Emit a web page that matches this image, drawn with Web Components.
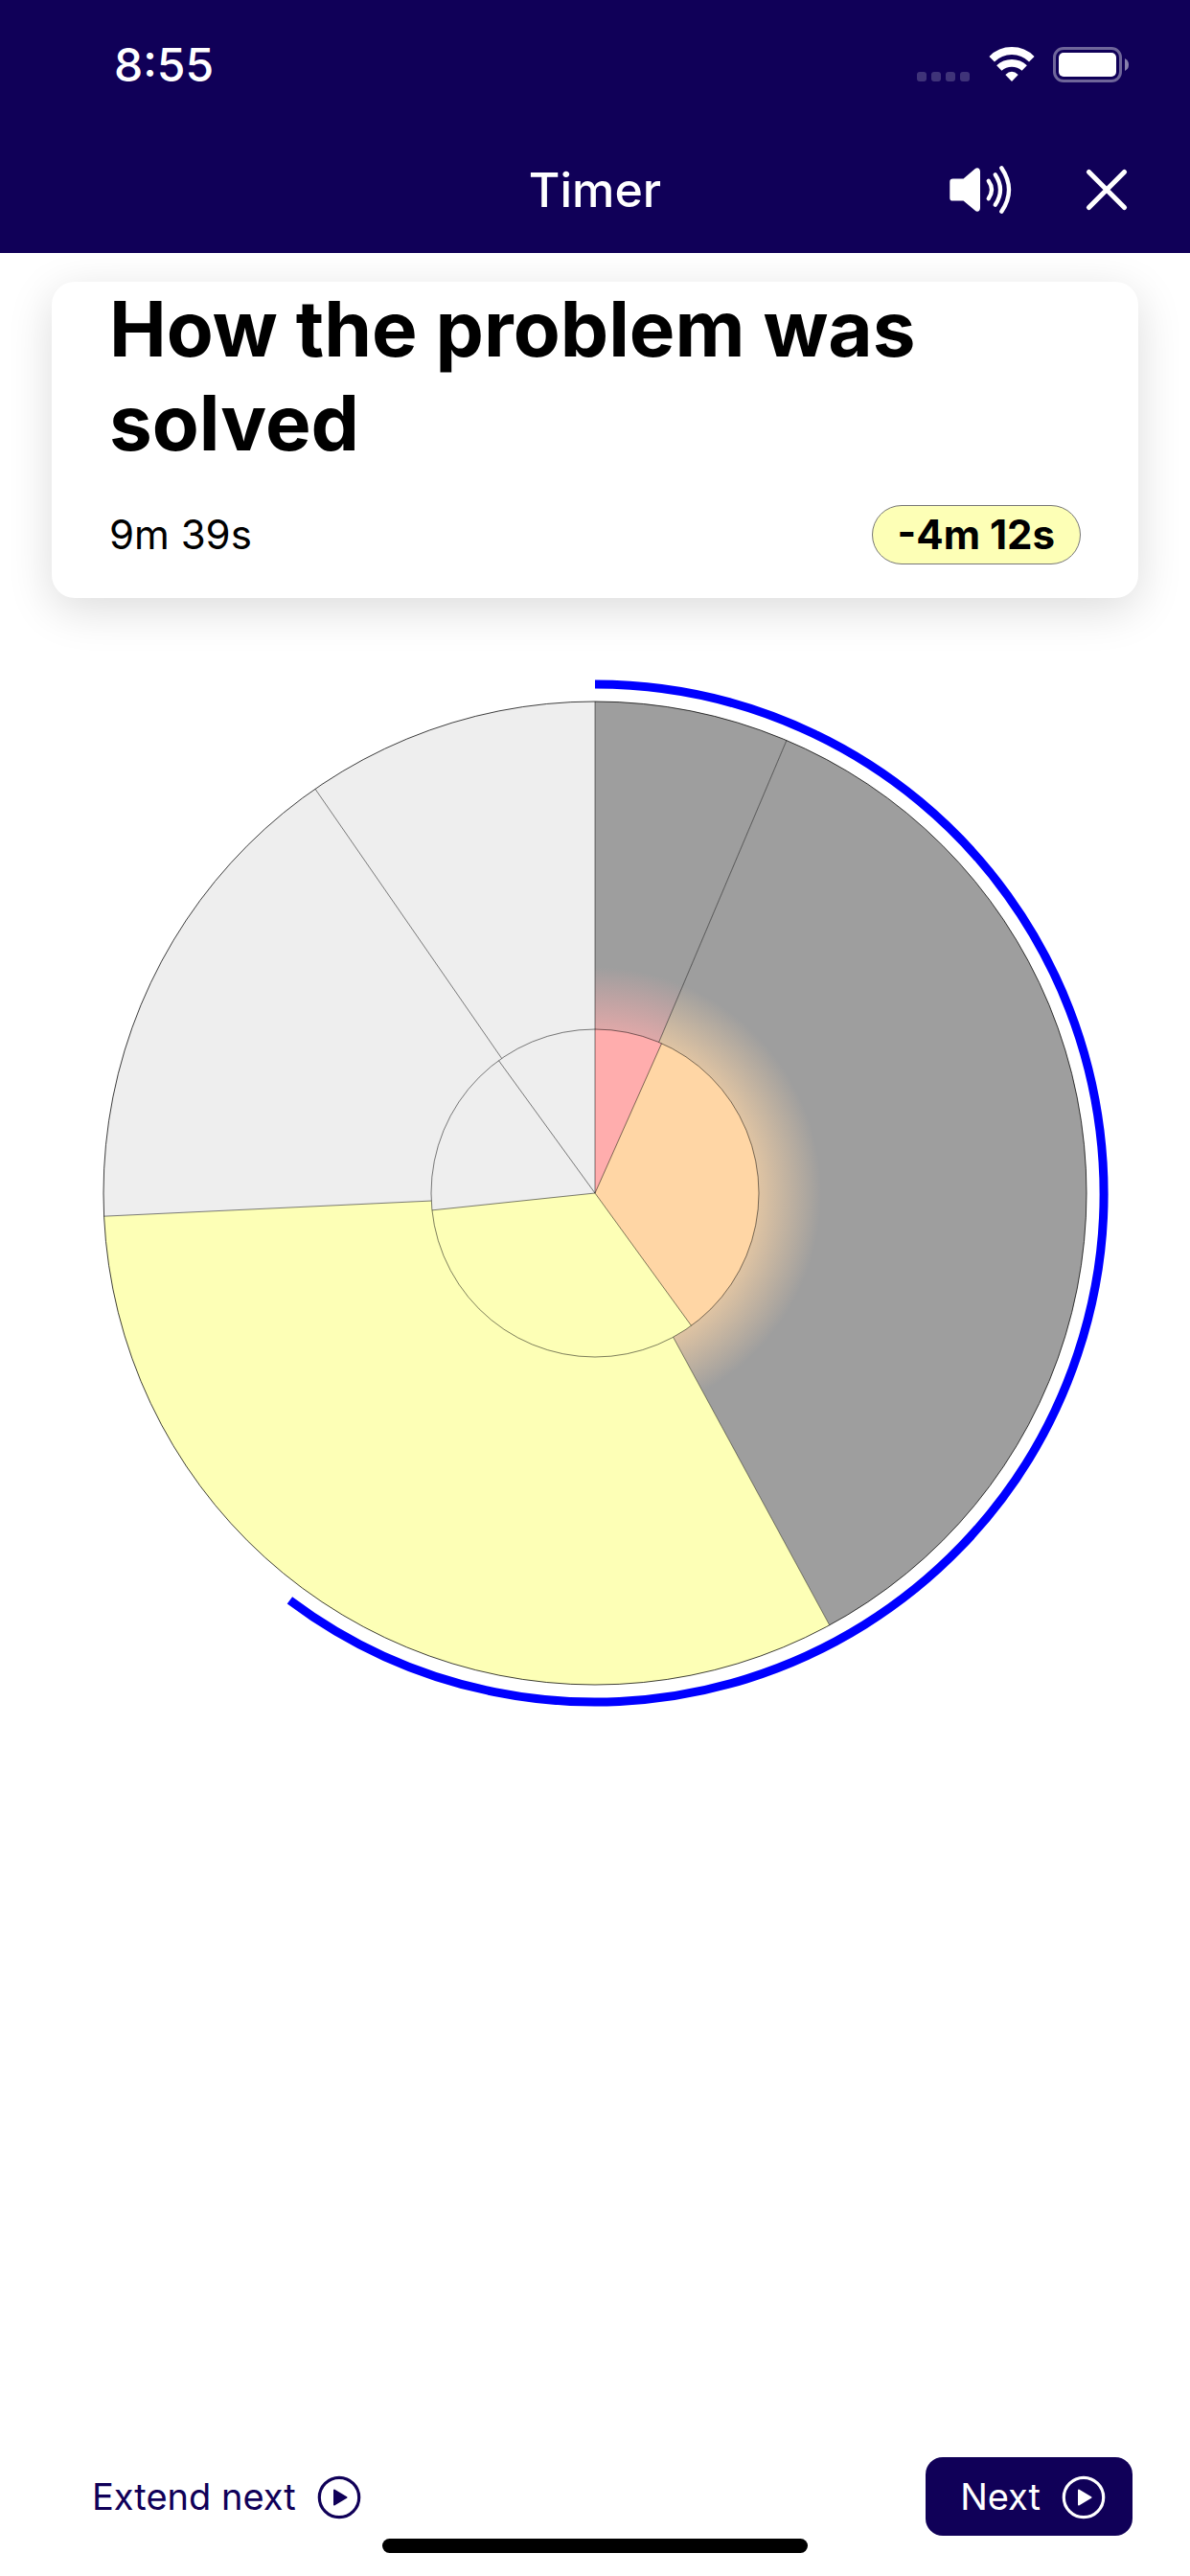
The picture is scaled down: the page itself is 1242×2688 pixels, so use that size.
<!DOCTYPE html>
<html lang="en">
<head>
<meta charset="utf-8">
<meta name="viewport" content="width=device-width, initial-scale=1">
<title>Timer</title>
<style>
  html, body { margin: 0; }
  body {
    --navy: #100058;
    --gutter: 54px;
    background: #fff;
    color: #000;
    font-family: Inter, "Liberation Sans", sans-serif;
  }
</style>
</head>
<body>
<timer-screen></timer-screen>

<script>
  const define = (name, html, setup) => {
    const template = document.createElement('template');
    template.innerHTML = html;
    customElements.define(name, class extends HTMLElement {
      constructor() {
        super();
        this.attachShadow({ mode: 'open' }).append(template.content.cloneNode(true));
      }
      connectedCallback() { if (setup) setup(this, this.shadowRoot); }
    });
  };

  define('status-bar', `
    <style>
      :host { display: flex; align-items: center; justify-content: space-between; box-sizing: border-box;
        height: 132px; padding: 3px 63px 0 119px; color: #fff; }
      time { font-size: 48px; line-height: 60px; font-weight: 500; }
      .icons { display: flex; align-items: center; gap: 19px; }
      svg { display: block; }
    </style>
    <time>8:55</time>
    <div class="icons">
      <svg width="56" height="37" viewBox="0 0 56 37" fill="#fff" fill-opacity=".2" aria-hidden="true">
        <rect x="0" y="26" width="10" height="10" rx="3"/><rect x="15" y="26" width="10" height="10" rx="3"/>
        <rect x="30" y="26" width="10" height="10" rx="3"/><rect x="45" y="26" width="10" height="10" rx="3"/>
      </svg>
      <svg width="48" height="37" viewBox="0 0 48 37" aria-hidden="true">
        <g fill="none" stroke="#fff" stroke-width="7.8">
          <path d="M3.2 12.7A29.2 29.2 0 0 1 44.8 12.7"/><path d="M10.8 22A19.3 19.3 0 0 1 37.2 22"/>
        </g>
        <path fill="#fff" d="M24 36L17.3 29Q24 22.4 30.7 29Z"/>
      </svg>
      <svg width="80" height="37" viewBox="0 0 80 37" aria-hidden="true">
        <rect x="1.5" y="1.5" width="69" height="34" rx="9.5" fill="none" stroke="#fff" stroke-opacity=".4" stroke-width="3"/>
        <rect x="6" y="6" width="60" height="25" rx="5" fill="#fff"/>
        <path d="M75 12Q79 14 79 18.500Q79 23 75 25Z" fill="#fff" fill-opacity=".5"/>
      </svg>
    </div>`);

  define('nav-bar', `
    <style>
      :host { display: grid; grid-template-columns: 1fr auto 1fr; align-items: center; box-sizing: border-box;
        height: 132px; padding: 0 63px; color: #fff; }
      h1 { grid-column: 2; margin: 0; font-size: 50px; line-height: 60px; font-weight: 500; }
      .actions { display: flex; align-items: center; justify-content: flex-end; gap: 75px; }
      button { display: block; padding: 0; border: 0; background: none; color: inherit; cursor: pointer; }
      svg { display: block; }
    </style>
    <h1><slot></slot></h1>
    <div class="actions">
      <button type="button" aria-label="Sound">
        <svg width="66" height="54" viewBox="0 0 66 54">
          <path fill="#fff" d="M4.500 15.500H15.500L27.500 5.300C30 3 33 4.500 33 8V46C33 49.300 30 51 27.500 48.500L15.500 38.600H4.500Q1.300 38.600 1.300 35.400V18.700Q1.300 15.500 4.500 15.500Z"/>
          <g fill="none" stroke="#fff" stroke-width="4.300" stroke-linecap="round">
            <path d="M41.700 17.800Q48.300 27 41.700 36.200"/><path d="M48.700 11.200Q59.300 27 48.700 42.800"/><path d="M55.300 4.200Q70.700 27 55.300 49.800"/>
          </g>
        </svg>
      </button>
      <button type="button" aria-label="Close">
        <svg width="48" height="48" viewBox="0 0 48 48" stroke="#fff" stroke-width="5.200" stroke-linecap="round">
          <path d="M5.500 5.500L42.500 42.500M42.500 5.500L5.500 42.500"/>
        </svg>
      </button>
    </div>`);

  define('segment-card', `
    <style>
      :host { display: block; margin: 30px var(--gutter) 0; padding: 0 60px 35px; border-radius: 24px;
        background: #fff; box-shadow: 0 12px 48px rgba(0, 0, 0, .14); }
      h2 { margin: 0 0 35px; font-size: 80px; line-height: 98px; font-weight: 700; }
      .row { display: flex; align-items: center; justify-content: space-between; padding-top: 2px; font-size: 42px; line-height: 60px; }
      .badge { padding: 0 26px; border: 1px solid #777; border-radius: 31px; background: #fdffb6; font-weight: 700; }
    </style>
    <h2><slot></slot></h2>
    <div class="row"><span><slot name="elapsed"></slot></span><span class="badge"><slot name="left"></slot></span></div>`);

  define('timer-chart', `
    <style>
      :host { display: block; margin: 54px var(--gutter) 0; }
      svg { display: block; width: 100%; height: auto; }
    </style>
    <svg viewBox="0 0 1134 1134" role="img" aria-label="Planned and actual time per segment">
      <defs>
        <radialGradient id="glow-red" gradientUnits="userSpaceOnUse" cx="567" cy="567" r="513">
          <stop offset=".27" stop-color="#ffadad"/><stop offset=".46" stop-color="#9e9e9e"/>
        </radialGradient>
        <radialGradient id="glow-orange" gradientUnits="userSpaceOnUse" cx="567" cy="567" r="513">
          <stop offset=".27" stop-color="#ffd6a5"/><stop offset=".46" stop-color="#9e9e9e"/>
        </radialGradient>
      </defs>
      <g class="fills"></g>
      <g class="lines" fill="none" stroke="#000" stroke-opacity=".5" stroke-width="1"></g>
      <path class="progress" fill="none" stroke="#00f" stroke-width="9"/>
    </svg>`, (host, root) => {
    const C = 567, OUTER = 513, INNER = 171, TRACK = 531;
    const at = (deg, r) => {
      const a = deg * Math.PI / 180;
      return (C + r * Math.sin(a)).toFixed(2) + ' ' + (C - r * Math.cos(a)).toFixed(2);
    };
    const arc = (a, b, r) => `M${at(a, r)}A${r} ${r} 0 ${b - a > 180 ? 1 : 0} 1 ${at(b, r)}`;
    const add = (parent, attrs, tag = 'path') => {
      const el = document.createElementNS('http://www.w3.org/2000/svg', tag);
      for (const key in attrs) el.setAttribute(key, attrs[key]);
      parent.append(el);
    };
    const fills = root.querySelector('.fills'), lines = root.querySelector('.lines');
    const ring = (stops, colors, r, from) => stops.forEach((end, i) => {
      const start = i ? stops[i - 1] : 0;
      add(fills, { d: `${arc(start, end, r)}L${C} ${C}Z`, fill: colors[i] });
      add(lines, { d: `M${at(end, from)}L${at(end, r)}` });
    });
    ring([22.94, 151.5, 267.3, 325.3, 360],
      ['url(#glow-red)', 'url(#glow-orange)', '#fdffb6', '#eee', '#eee'], OUTER, INNER);
    ring([24, 144, 264, 324, 360], ['#ffadad', '#ffd6a5', '#fdffb6', '#eee', '#eee'], INNER, 0);
    add(lines, { cx: C, cy: C, r: OUTER, 'stroke-opacity': .75 }, 'circle');
    add(lines, { cx: C, cy: C, r: INNER }, 'circle');
    root.querySelector('.progress').setAttribute('d', arc(0, 216.87, TRACK));
  });

  define('play-button', `
    <style>
      :host { display: block; }
      button { display: flex; align-items: center; gap: 18px; height: 82px; padding: 0 24px 0 36px; border: 0;
        border-radius: 18px; background: none; color: var(--navy); font: 400 38px/48px Inter, "Liberation Sans", sans-serif; cursor: pointer; }
      :host([primary]) button { background: var(--navy); color: #fff; }
      svg { display: block; }
    </style>
    <button type="button"><slot></slot>
      <svg width="54" height="54" viewBox="0 0 54 54" aria-hidden="true">
        <circle cx="27" cy="28" r="20.700" fill="none" stroke="currentColor" stroke-width="3.200"/>
        <path d="M22 20.500L34.500 28L22 35.500Z" fill="currentColor" stroke="currentColor" stroke-width="2" stroke-linejoin="round"/>
      </svg>
    </button>`);

  define('timer-screen', `
    <style>
      :host { display: flex; flex-direction: column; min-height: 100vh; }
      header { background: var(--navy); }
      main { flex: 1; }
      .controls { display: flex; justify-content: space-between; padding: 0 60px; }
      .home { width: 444px; height: 15px; margin: 3px auto 24px; border-radius: 8px; background: #000; }
    </style>
    <header><status-bar></status-bar><nav-bar>Timer</nav-bar></header>
    <main>
      <segment-card>How the problem was solved<span slot="elapsed">9m 39s</span><span slot="left">-4m 12s</span></segment-card>
      <timer-chart></timer-chart>
    </main>
    <footer>
      <div class="controls"><play-button>Extend next</play-button><play-button primary>Next</play-button></div>
      <div class="home"></div>
    </footer>`);
</script>
</body>
</html>
